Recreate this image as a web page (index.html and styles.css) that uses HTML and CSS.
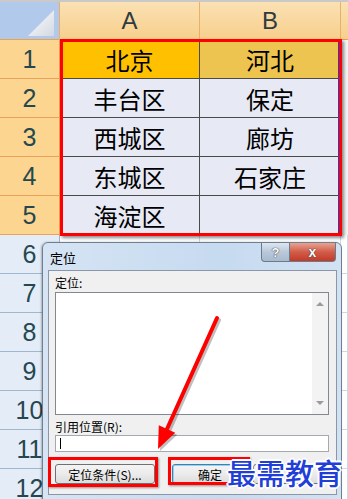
FILE: index.html
```html
<!DOCTYPE html>
<html lang="zh-CN">
  <head>
    <meta charset="UTF-8" />
    <title>定位</title>
    <link rel="stylesheet" href="styles.css">
  </head>
  <body>
    <div class="page">
      <section class="sheet">
        <div class="corner"></div>
        <div class="colHead">A</div>
        <div class="colHead">B</div>
        <div class="colHead rest"></div>

        <div class="rowHead">1</div>
        <div class="cell gold">北京</div>
        <div class="cell goldDim">河北</div>
        <div class="cell rest"></div>

        <div class="rowHead">2</div>
        <div class="cell">丰台区</div>
        <div class="cell">保定</div>
        <div class="cell rest"></div>

        <div class="rowHead">3</div>
        <div class="cell">西城区</div>
        <div class="cell">廊坊</div>
        <div class="cell rest"></div>

        <div class="rowHead">4</div>
        <div class="cell">东城区</div>
        <div class="cell">石家庄</div>
        <div class="cell rest"></div>

        <div class="rowHead">5</div>
        <div class="cell">海淀区</div>
        <div class="cell"></div>
        <div class="cell rest"></div>

        <div class="rowHead plain">6</div><div class="cell empty"></div><div class="cell empty"></div><div class="cell empty"></div>
        <div class="rowHead plain">7</div><div class="cell empty"></div><div class="cell empty"></div><div class="cell empty"></div>
        <div class="rowHead plain">8</div><div class="cell empty"></div><div class="cell empty"></div><div class="cell empty"></div>
        <div class="rowHead plain">9</div><div class="cell empty"></div><div class="cell empty"></div><div class="cell empty"></div>
        <div class="rowHead plain">10</div><div class="cell empty"></div><div class="cell empty"></div><div class="cell empty"></div>
        <div class="rowHead plain">11</div><div class="cell empty"></div><div class="cell empty"></div><div class="cell empty"></div>
        <div class="rowHead plain">12</div><div class="cell empty"></div><div class="cell empty"></div><div class="cell empty"></div>
      </section>

      <div class="markRange"></div>

      <section class="dialog">
        <header class="titleBar">
          <span class="title">定位</span>
          <div class="winBtns">
            <span class="helpBtn">?</span>
            <span class="closeBtn">x</span>
          </div>
        </header>
        <div class="panel">
          <p class="label">定位:</p>
          <div class="listBox">
            <div class="scroll">
              <span class="arrowUp"></span>
              <span class="arrowDown"></span>
            </div>
          </div>
          <p class="label">引用位置(<u>R</u>):</p>
          <div class="inputBox"><span class="caret"></span></div>
          <div class="buttons">
            <button class="btn special">定位条件(<u>S</u>)...</button>
            <button class="btn ok">确定</button>
            <button class="btn cancel"></button>
          </div>
        </div>
      </section>

      <div class="markBox markSpecial"></div>
      <div class="markBox markOk"></div>

      <svg class="arrow" width="348" height="499" viewBox="0 0 348 499">
        <g class="arrowShadow" transform="translate(2 2)">
          <line x1="217" y1="318" x2="167" y2="429" />
          <polygon points="158,449 158.8,425.3 175.2,432.7" />
        </g>
        <g class="arrowRed">
          <line x1="217" y1="318" x2="167" y2="429" />
          <polygon points="158,449 158.8,425.3 175.2,432.7" />
        </g>
      </svg>

      <div class="watermark">最需教育</div>
    </div>
  </body>
</html>
```

FILE: styles.css
```css
body {
  margin: 0;
  padding: 0;
  background: #ffffff;
}

.page {
  position: relative;
  width: 348px;
  height: 499px;
  overflow: hidden;
  font-family: "Noto Sans CJK SC", "Liberation Sans", sans-serif;
}

/* spreadsheet */
.sheet {
  display: grid;
  grid-template-columns: 60px 140px 141px 7px;
  grid-template-rows: 38px repeat(12, 39px);
  border-top: 2px solid #c9c9c9;
}

.corner {
  position: relative;
  background: #b1c9ea;
  border-right: 1px solid #e9b06a;
  border-bottom: 1px solid #e9a253;
}
.corner::after {
  content: "";
  position: absolute;
  left: 28px;
  top: 8px;
  width: 26px;
  height: 26px;
  background: linear-gradient(135deg, #ffffff, #d2d8e2);
  clip-path: polygon(100% 0, 100% 100%, 0 100%);
}

.colHead {
  display: flex;
  align-items: center;
  justify-content: center;
  background: linear-gradient(#fbe1b3, #f7cf8d);
  border-right: 1px solid #e9b06a;
  border-bottom: 1px solid #e9a253;
  font-family: "Liberation Sans", sans-serif;
  font-size: 24px;
  color: #303b40;
}
.colHead.rest {
  border-right: none;
}

.rowHead {
  display: flex;
  align-items: center;
  justify-content: center;
  background: #fcd590;
  border-right: 1px solid #e9a253;
  border-bottom: 1px solid #eaa25a;
  font-family: "Liberation Sans", sans-serif;
  font-size: 25px;
  color: #25474f;
}
.rowHead.plain {
  background: #e4ecf7;
  border-right-color: #9eb6ce;
  border-bottom-color: #9eb6ce;
}

.cell {
  display: flex;
  align-items: center;
  justify-content: center;
  background: #e7e9f4;
  border-right: 1px solid #4a4a4a;
  border-bottom: 1px solid #4a4a4a;
  font-size: 24px;
  color: #000000;
}
.cell.gold {
  background: #ffc000;
}
.cell.goldDim {
  background: #ecc44f;
}
.cell.rest {
  background: #f4f4f4;
  border: none;
}
.cell.empty {
  background: #ffffff;
  border-right-color: #d0d7e5;
  border-bottom-color: #d0d7e5;
}

.markRange {
  position: absolute;
  left: 60px;
  top: 39px;
  width: 276px;
  height: 191px;
  border: 3px solid #ff0000;
  box-shadow: 2px 2px 3px rgba(0, 0, 0, 0.45), inset -1px 0 0 #1f3fd0;
}

/* dialog */
.dialog {
  position: absolute;
  left: 42px;
  top: 242px;
  width: 298px;
  height: 262px;
  border: 1px solid #6f7f92;
  border-radius: 6px 6px 0 0;
  background: linear-gradient(90deg, #d6e4f4, #c6daf0 60%, #d2e2f3);
  box-shadow: -1px 0 2px rgba(0, 0, 0, 0.25);
}

.titleBar {
  display: flex;
  justify-content: space-between;
  height: 27px;
}
.title {
  padding: 5px 0 0 7px;
  font-size: 13px;
  color: #000000;
}
.winBtns {
  display: flex;
  margin-right: 5px;
}
.helpBtn,
.closeBtn {
  display: flex;
  align-items: center;
  justify-content: center;
  height: 18px;
  border: 1px solid #6b7b8c;
  border-top: none;
  font-family: "Liberation Sans", sans-serif;
  font-weight: bold;
  color: #ffffff;
  text-shadow: 0 0 1px #333, 0 0 1px #333;
}
.helpBtn {
  width: 27px;
  border-radius: 0 0 0 4px;
  background: linear-gradient(#dce6f1, #b9c8d9 50%, #a9bbcf);
  font-size: 13px;
}
.closeBtn {
  width: 45px;
  border-left: none;
  border-radius: 0 0 4px 0;
  background: linear-gradient(#e9a293, #d25c48 50%, #c13b29);
  font-size: 14px;
}

.panel {
  display: flex;
  flex-direction: column;
  margin: 0 4px 0 5px;
  height: 220px;
  padding: 3px 7px 0 6px;
  background: #f0f0f0;
  border: 1px solid #8a97a8;
}
.label {
  margin: 0;
  font-size: 12px;
  line-height: 17px;
  color: #000000;
}
.label u {
  text-decoration: none;
}
.listBox {
  position: relative;
  height: 121px;
  margin: 1px 0 3px;
  background: #ffffff;
  border: 1px solid #828790;
}
.scroll {
  position: absolute;
  right: 0;
  top: 0;
  bottom: 0;
  width: 16px;
  background: #f3f3f3;
}
.arrowUp,
.arrowDown {
  position: absolute;
  left: 4px;
  width: 0;
  height: 0;
  border-left: 4px solid transparent;
  border-right: 4px solid transparent;
}
.arrowUp {
  top: 9px;
  border-bottom: 4px solid #9a9a9a;
}
.arrowDown {
  bottom: 9px;
  border-top: 4px solid #9a9a9a;
}

.inputBox {
  position: relative;
  height: 15px;
  margin-top: 0;
  background: #ffffff;
  border: 1px solid #a4a9b0;
}
.caret {
  position: absolute;
  left: 4px;
  top: 2px;
  width: 1px;
  height: 11px;
  background: #000000;
}

.buttons {
  display: flex;
  gap: 17px;
  margin-top: 12px;
}
.btn {
  height: 20px;
  padding: 0;
  border: 1px solid #707070;
  border-radius: 3px;
  background: linear-gradient(#f4f4f4, #ebebeb 50%, #dcdcdc);
  font-family: "Noto Sans CJK SC", sans-serif;
  font-size: 12px;
  color: #000000;
}
.btn u {
  text-decoration: none;
}
.btn.special {
  width: 100px;
}
.btn.ok {
  width: 76px;
  border-color: #3c7fb1;
  box-shadow: inset 0 0 0 1px #94d0f0;
}
.btn.cancel {
  width: 74px;
  margin-left: -12px;
}

.markBox {
  position: absolute;
  border: 3px solid #ff0000;
  box-shadow: 1px 1px 2px rgba(0, 0, 0, 0.4);
}
.markSpecial {
  left: 48px;
  top: 457px;
  width: 104px;
  height: 24px;
}
.markOk {
  left: 168px;
  top: 457px;
  width: 76px;
  height: 22px;
}

.arrow {
  position: absolute;
  left: 0;
  top: 0;
}
.arrow line {
  stroke-width: 4;
  stroke-linecap: round;
}
.arrowShadow line {
  stroke: rgba(0, 0, 0, 0.25);
}
.arrowShadow polygon {
  fill: rgba(0, 0, 0, 0.25);
}
.arrowRed line {
  stroke: #ff0000;
}
.arrowRed polygon {
  fill: #ff0000;
}

.watermark {
  position: absolute;
  left: 227px;
  top: 451px;
  font-size: 29px;
  font-weight: 500;
  color: #1f3fd8;
  text-shadow: 1px 1px 0 #fff, -1px -1px 0 #fff, 1px -1px 0 #fff, -1px 1px 0 #fff, 2px 0 0 #fff, -2px 0 0 #fff, 0 2px 0 #fff, 0 -2px 0 #fff;
}
```
